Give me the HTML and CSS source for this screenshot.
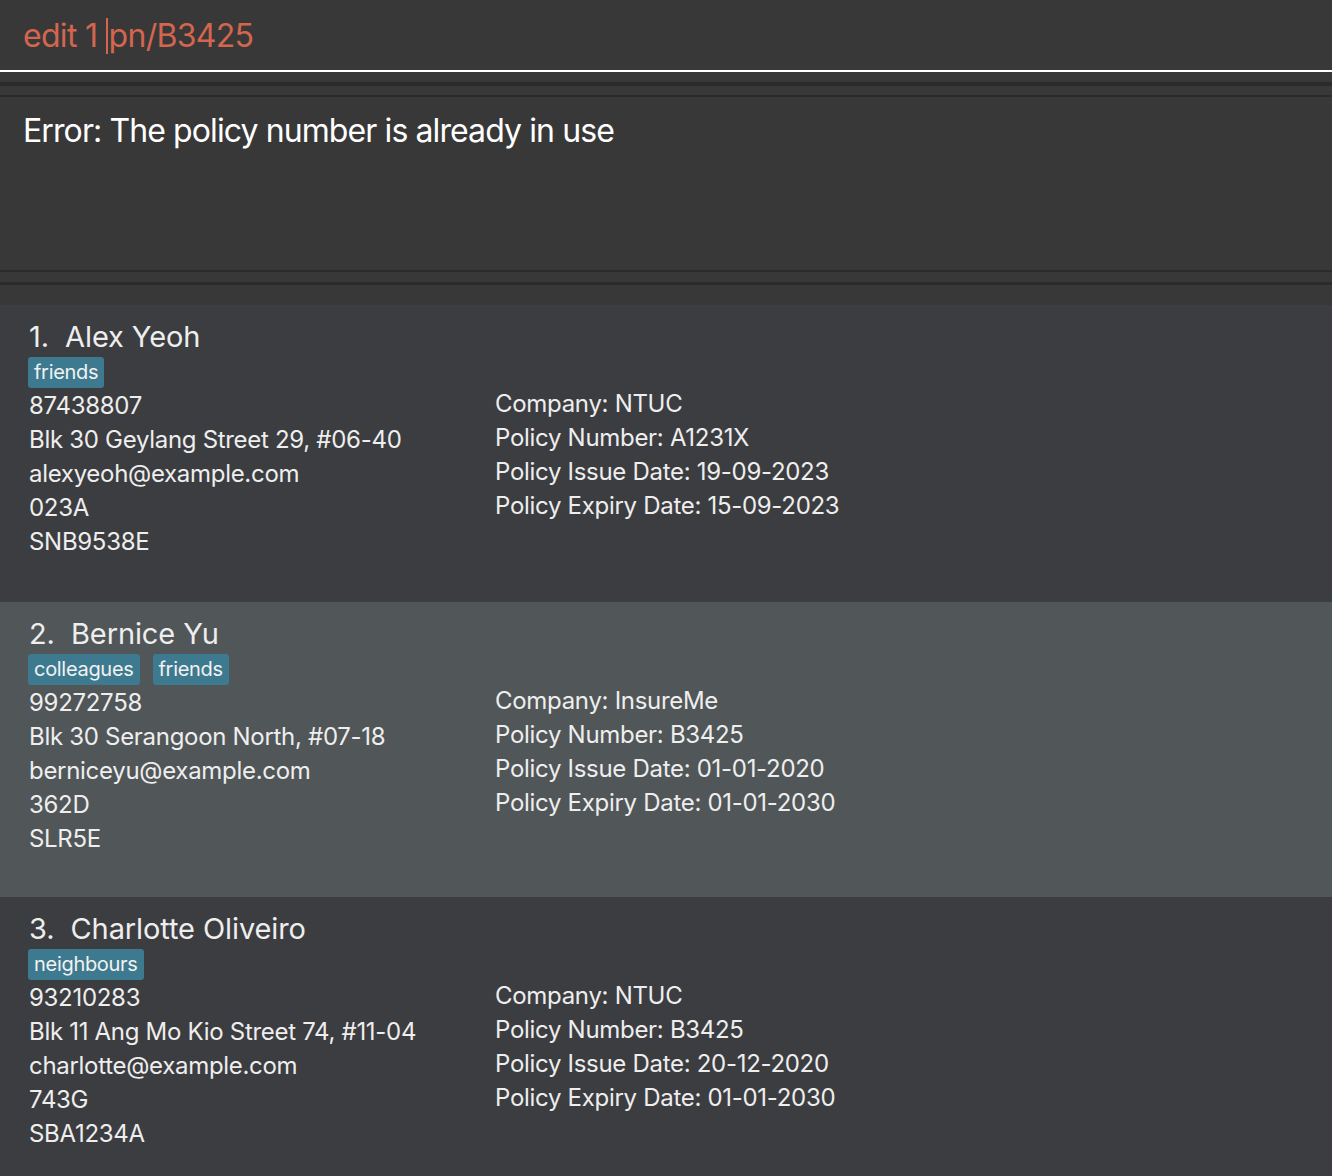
FILE: index.html
```html
<!DOCTYPE html>
<html>
<head>
<meta charset="utf-8">
<link rel="stylesheet" href="styles.css">
</head>
<body>
<div class="app">
  <div class="command-box">
    <div class="command-text">edit 1 <span class="caret"></span>pn/B3425</div>
  </div>
  <div class="gap-a"></div>
  <div class="result-box">
    <div class="result-text">Error: The policy number is already in use</div>
  </div>
  <div class="gap-b"></div>
  <div class="list">
    <div class="card">
      <div class="name">1.&nbsp; Alex Yeoh</div>
      <div class="tags"><span class="tag">friends</span></div>
      <div class="details">
        <div class="col-left">
          <div class="line">87438807</div>
          <div class="line">Blk 30 Geylang Street 29, #06-40</div>
          <div class="line">alexyeoh@example.com</div>
          <div class="line">023A</div>
          <div class="line">SNB9538E</div>
        </div>
        <div class="col-right">
          <div class="line">Company: NTUC</div>
          <div class="line">Policy Number: A1231X</div>
          <div class="line">Policy Issue Date: 19-09-2023</div>
          <div class="line">Policy Expiry Date: 15-09-2023</div>
        </div>
      </div>
    </div>
    <div class="card selected">
      <div class="name">2.&nbsp; Bernice Yu</div>
      <div class="tags"><span class="tag">colleagues</span><span class="tag">friends</span></div>
      <div class="details">
        <div class="col-left">
          <div class="line">99272758</div>
          <div class="line">Blk 30 Serangoon North, #07-18</div>
          <div class="line">berniceyu@example.com</div>
          <div class="line">362D</div>
          <div class="line">SLR5E</div>
        </div>
        <div class="col-right">
          <div class="line">Company: InsureMe</div>
          <div class="line">Policy Number: B3425</div>
          <div class="line">Policy Issue Date: 01-01-2020</div>
          <div class="line">Policy Expiry Date: 01-01-2030</div>
        </div>
      </div>
    </div>
    <div class="card">
      <div class="name">3.&nbsp; Charlotte Oliveiro</div>
      <div class="tags"><span class="tag">neighbours</span></div>
      <div class="details">
        <div class="col-left">
          <div class="line">93210283</div>
          <div class="line">Blk 11 Ang Mo Kio Street 74, #11-04</div>
          <div class="line">charlotte@example.com</div>
          <div class="line">743G</div>
          <div class="line">SBA1234A</div>
        </div>
        <div class="col-right">
          <div class="line">Company: NTUC</div>
          <div class="line">Policy Number: B3425</div>
          <div class="line">Policy Issue Date: 20-12-2020</div>
          <div class="line">Policy Expiry Date: 01-01-2030</div>
        </div>
      </div>
    </div>
  </div>
</div>
</body>
</html>
```
FILE: styles.css
```css
html, body {
  margin: 0;
  padding: 0;
  background: #383838;
  font-family: Inter, "Open Sans", sans-serif;
  color: #ececec;
}
.app {
  width: 1332px;
  height: 1176px;
  overflow: hidden;
  display: flex;
  flex-direction: column;
}
.app > * {
  flex-shrink: 0;
}
.command-box {
  height: 70px;
  border-bottom: 2px solid #ffffff;
  background: #383838;
  display: flex;
  align-items: center;
  padding-left: 23px;
  box-sizing: content-box;
}
.command-text {
  color: #d4654f;
  font-size: 32px;
  letter-spacing: -0.7px;
  display: flex;
  align-items: center;
  white-space: pre;
  margin-top: 1px;
}
.caret {
  display: inline-block;
  width: 2px;
  height: 36px;
  background: #d4654f;
  margin: 0 1px 0 0;
}
.gap-a {
  height: 10px;
  border-bottom: 4px solid #2b2b2b;
  background: #383838;
}
.result-box {
  height: 177px;
  border-top: 2px solid #2b2b2b;
  border-bottom: 2px solid #2b2b2b;
  margin-top: 9px;
  box-sizing: border-box;
  padding: 14px 23px 0 23px;
}
.result-text {
  color: #ffffff;
  font-size: 32px;
  letter-spacing: -0.9px;
}
.gap-b {
  height: 10px;
  border-bottom: 3px solid #2b2b2b;
}
.list {
  margin-top: 20px;
  display: flex;
  flex-direction: column;
}
.card {
  background: #3c3d40;
  height: 297px;
  flex-shrink: 0;
  box-sizing: border-box;
  padding: 14px 29px 0 29px;
}
.card.selected {
  background: #515658;
  height: 295px;
}
.name {
  font-size: 29px;
  line-height: 36px;
  letter-spacing: -0.1px;
  color: #eeeeee;
}
.tags {
  display: flex;
  gap: 13px;
  margin-top: 2px;
  margin-bottom: 1px;
  margin-left: -1px;
}
.tag {
  background: #3e7a8f;
  color: #f2f2f2;
  font-size: 20px;
  line-height: 31px;
  padding: 0 6px;
  border-radius: 3px;
  letter-spacing: -0.3px;
}
.details {
  display: flex;
  align-items: flex-start;
}
.col-left {
  width: 466px;
}
.col-right {
  margin-top: -2px;
}
.line {
  font-size: 24px;
  line-height: 34px;
  letter-spacing: -0.3px;
  color: #eeeeee;
}
```
